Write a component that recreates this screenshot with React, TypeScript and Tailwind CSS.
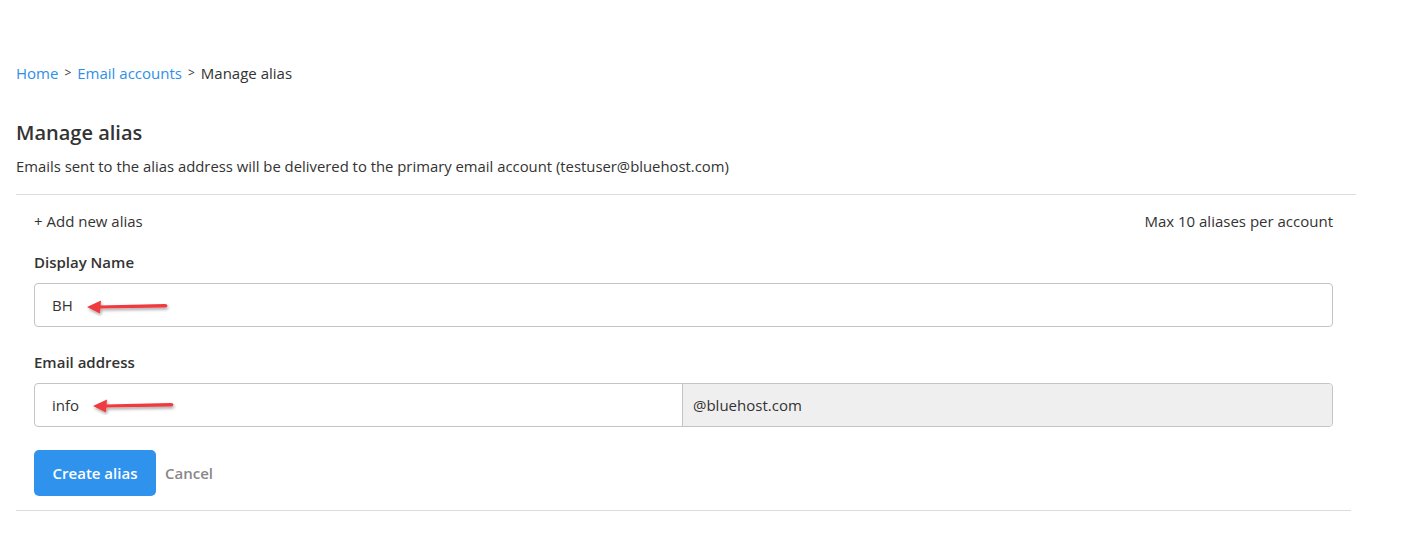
import React from "react";

const Arrow = ({ className }: { className: string }) => (
  <svg className={className} width="96" height="20" viewBox="0 0 96 20">
    <defs>
      <filter id="sh" x="-20%" y="-50%" width="140%" height="200%">
        <feDropShadow dx="1" dy="2" stdDeviation="1.5" floodColor="#000" floodOpacity="0.35" />
      </filter>
    </defs>
    <g filter="url(#sh)">
      <path d="M18 9.5 L84 8 Q86.5 8 86.5 9.7 Q86.5 11.4 84 11.4 L18 12.5 Z" fill="#ef3b3f" />
      <path d="M6 11 L20 4.5 L19 17.5 Z" fill="#ef3b3f" />
    </g>
  </svg>
);

export default function App() {
  return (
    <div className="min-h-[558px] bg-white text-[#333] [font-family:'Open_Sans',sans-serif] text-[15px]">
      <div className="pt-[62px] pl-4 pr-[58px]">
        <nav className="flex items-center gap-[6px] leading-[22px]">
          <a className="text-[#2f8fe8]">Home</a>
          <span className="text-[12px]">&gt;</span>
          <a className="text-[#2f8fe8]">Email accounts</a>
          <span className="text-[12px]">&gt;</span>
          <span>Manage alias</span>
        </nav>

        <h1 className="mt-[35px] text-[20px] font-semibold leading-[28px]">Manage alias</h1>
        <p className="mt-[8px] text-[14.85px] leading-[22px]">
          Emails sent to the alias address will be delivered to the primary email account (testuser@bluehost.com)
        </p>

        <div className="mt-[17px] border-t border-[#dcdcdc]">
          <div className="pl-[18px] pr-[23px] pt-[15px] pb-[14px]">
            <div className="flex items-center justify-between leading-[22px]">
              <span>+ Add new alias</span>
              <span>Max 10 aliases per account</span>
            </div>

            <label className="mt-[19px] block font-semibold leading-[22px]">Display Name</label>
            <div className="relative mt-[10px] flex h-[44px] items-center rounded-[4px] border border-[#c4c4c4] px-[17px]">
              BH
              <Arrow className="absolute left-[46px] top-[12px]" />
            </div>

            <label className="mt-[24px] block font-semibold leading-[22px]">Email address</label>
            <div className="mt-[10px] flex h-[44px] rounded-[4px] border border-[#c4c4c4]">
              <div className="relative flex w-[647px] items-center px-[17px]">
                info
                <Arrow className="absolute left-[52px] top-[11px]" />
              </div>
              <div className="flex flex-1 items-center rounded-r-[4px] border-l border-[#c4c4c4] bg-[#efefef] px-[10px]">
                @bluehost.com
              </div>
            </div>

            <div className="mt-[23px] flex items-center gap-[9px]">
              <button className="h-[46px] w-[122px] rounded-[5px] bg-[#2f93ee] font-semibold text-white">
                Create alias
              </button>
              <button className="font-semibold text-[#888]">Cancel</button>
            </div>
          </div>
          <div className="mr-[5px] border-t border-[#dcdcdc]" />
        </div>
      </div>
    </div>
  );
}
